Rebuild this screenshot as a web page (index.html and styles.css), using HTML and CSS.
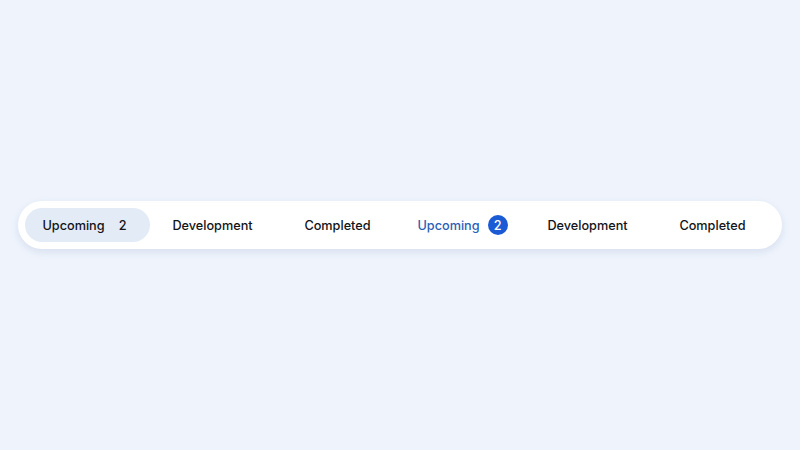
FILE: index.html
```html
<!DOCTYPE html>
<html>
<head>
<meta charset="utf-8">
<link rel="stylesheet" href="styles.css">
</head>
<body>
<div class="page">
  <nav class="tabs">
    <div class="tab active"><span>Upcoming</span><span class="badge plain">2</span></div>
    <div class="tab"><span>Development</span></div>
    <div class="tab"><span>Completed</span></div>
    <div class="tab blue"><span>Upcoming</span><span class="badge">2</span></div>
    <div class="tab"><span>Development</span></div>
    <div class="tab"><span>Completed</span></div>
  </nav>
</div>
</body>
</html>
```
FILE: styles.css
```css
html, body {
  margin: 0;
  padding: 0;
}
body {
  background: #eff4fc;
  font-family: Inter, "Noto Sans", sans-serif;
  width: 800px;
  height: 450px;
  overflow: hidden;
}
.page {
  height: 450px;
  display: flex;
  align-items: center;
  justify-content: center;
}
.tabs {
  width: 764px;
  box-sizing: border-box;
  padding: 7px;
  background: #ffffff;
  border-radius: 24px;
  display: grid;
  grid-template-columns: repeat(6, 125px);
  box-shadow: 0 3px 8px rgba(40, 70, 140, 0.12);
}
.tab {
  height: 34px;
  display: flex;
  align-items: center;
  justify-content: center;
  gap: 8px;
  font-size: 12.7px;
  font-weight: 500;
  color: #111418;
  border-radius: 17px;
}
.tab.active {
  background: #e3ebf7;
}
.tab.blue {
  color: #2c5fb5;
}
.badge {
  width: 20px;
  height: 20px;
  border-radius: 50%;
  background: #1a5ad4;
  color: #fff;
  display: flex;
  align-items: center;
  justify-content: center;
  font-size: 12.7px;
}
.badge.plain {
  background: transparent;
  color: #111418;
}
```
